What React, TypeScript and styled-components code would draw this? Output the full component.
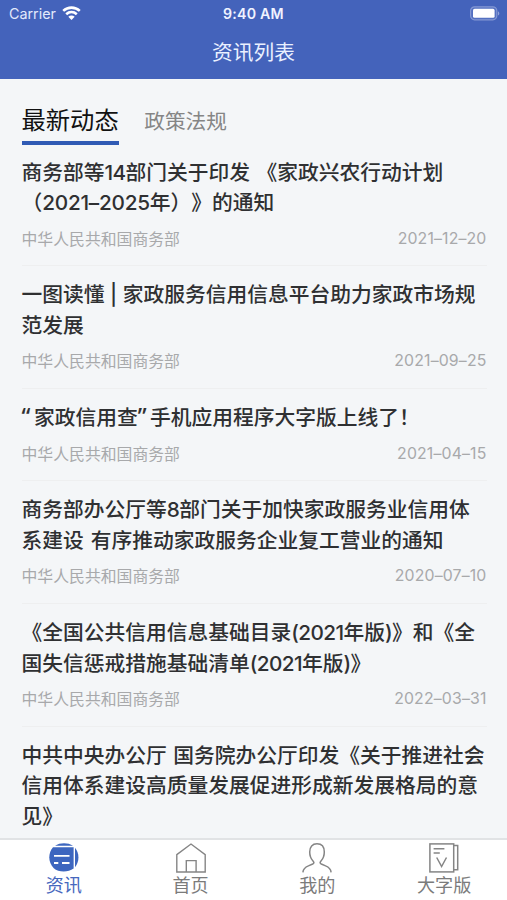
import React from "react";
import styled, { createGlobalStyle } from "styled-components";

const Global = createGlobalStyle`
  * { box-sizing: border-box; }
  html, body { margin: 0; padding: 0; }
  body {
    font-family: Inter, "Noto Sans CJK SC", sans-serif;
    background: #f4f6f8;
    overflow: hidden;
    text-spacing-trim: space-all;
  }
`;

const Screen = styled.div`
  width: 507px;
  height: 900px;
  display: flex;
  flex-direction: column;
  overflow: hidden;
  background: #f4f6f8;
`;

const Header = styled.header`
  height: 79px;
  flex: none;
  background: #4463bb;
  color: #fff;
`;

const StatusBar = styled.div`
  height: 27px;
  padding: 0 7px 0 9px;
  display: grid;
  grid-template-columns: 1fr auto 1fr;
  align-items: center;
`;

const Carrier = styled.div`
  display: flex;
  align-items: center;
  gap: 6px;
  font-size: 14.3px;
  color: #e3e9fb;
`;

const Clock = styled.div`
  font-size: 14.2px;
  font-weight: 600;
  letter-spacing: 0.2px;
  color: #f0f3ff;
  margin-right: 2px;
`;

const Battery = styled.div`
  display: flex;
  justify-content: flex-end;
`;

const PageTitle = styled.h1`
  margin: 0;
  height: 52px;
  line-height: 52px;
  text-align: center;
  font-size: 20.7px;
  font-weight: 400;
  color: #eaf0ff;
`;

const Content = styled.main`
  flex: 1;
  min-height: 0;
  overflow: hidden;
  padding: 22px 20.5px 0 21.5px;
`;

const Tabs = styled.nav`
  display: flex;
  height: 42.5px;
  gap: 25.5px;
`;

const Tab = styled.div<{ $active?: boolean }>`
  height: 43.5px;
  line-height: ${(p) => (p.$active ? 39 : 42)}px;
  font-size: ${(p) => (p.$active ? 24.3 : 20.7)}px;
  color: ${(p) => (p.$active ? "#111" : "#858585")};
  border-bottom: 4px solid ${(p) => (p.$active ? "#305bb5" : "transparent")};
`;

const Item = styled.article<{ $lines: number }>`
  height: ${(p) => 61.5 + p.$lines * 30.65}px;
  padding-top: 14px;
  border-bottom: 1px solid #eeeff0;
`;

const Title = styled.h2`
  margin: 0;
  font-size: 20.75px;
  line-height: 30.6px;
  font-weight: 500;
  color: #2f3032;
`;

const Line = styled.span<{ $space?: number }>`
  display: block;
  white-space: pre;
  word-spacing: ${(p) => p.$space ?? 0}px;
`;

const Digits = styled.span<{ $range?: boolean }>`
  letter-spacing: ${(p) => (p.$range ? -0.25 : -0.6)}px;
`;

const Quote = styled.span`
  display: inline-block;
  width: 12.4px;
  line-height: 1;
  font-family: "Noto Sans", sans-serif;
  font-size: 23px;
`;

const Meta = styled.div`
  margin-top: 7.5px;
  height: 24px;
  display: flex;
  justify-content: space-between;
  align-items: center;
  font-size: 15.85px;
  color: #a8a9ab;
`;

const PostDate = styled.time`
  letter-spacing: 0.15px;
`;

const TabBar = styled.footer`
  flex: none;
  height: 62px;
  display: grid;
  grid-template-columns: repeat(4, 1fr);
  background: #fff;
  border-top: 2px solid #e1e3e5;
`;

const BarItem = styled.div<{ $active?: boolean }>`
  display: flex;
  flex-direction: column;
  align-items: center;
  padding: 3px 0 0 1px;
  font-size: 18.1px;
  line-height: 25px;
  color: ${(p) => (p.$active ? "#4668be" : "#7b7b7b")};
  svg { display: block; flex: none; }
`;

type Row = { text: string; space?: number };

const news: { lines: Row[]; date?: string }[] = [
  {
    lines: [{ text: "商务部等14部门关于印发 《家政兴农行动计划", space: 1 }, { text: "（2021–2025年）》的通知" }],
    date: "2021–12–20",
  },
  {
    lines: [{ text: "一图读懂 | 家政服务信用信息平台助力家政市场规" }, { text: "范发展" }],
    date: "2021–09–25",
  },
  { lines: [{ text: "“家政信用查”手机应用程序大字版上线了！" }], date: "2021–04–15" },
  {
    lines: [
      { text: "商务部办公厅等8部门关于加快家政服务业信用体" },
      { text: "系建设 有序推动家政服务企业复工营业的通知", space: 1.5 },
    ],
    date: "2020–07–10",
  },
  {
    lines: [{ text: "《全国公共信用信息基础目录(2021年版)》和《全" }, { text: "国失信惩戒措施基础清单(2021年版)》" }],
    date: "2022–03–31",
  },
  {
    lines: [
      { text: "中共中央办公厅 国务院办公厅印发《关于推进社会", space: 1 },
      { text: "信用体系建设高质量发展促进形成新发展格局的意" },
      { text: "见》" },
    ],
  },
];

const renderText = (text: string) =>
  text.split(/([\d()–]+|[“”])/).map((part, i) => {
    if (/^[“”]$/.test(part)) return <Quote key={i}>{part}</Quote>;
    if (/^[\d()–]+$/.test(part)) {
      return (
        <Digits key={i} $range={part.includes("–")}>
          {part}
        </Digits>
      );
    }
    return part;
  });

const WifiIcon = () => (
  <svg width="19" height="15" viewBox="0 0 19 15" fill="none" stroke="#fff" strokeWidth="2.6">
    <path d="M1.2 4.9C6 .5 13 .5 17.8 4.9" />
    <path d="M4.2 8.2C7.3 5.4 11.7 5.4 14.8 8.2" />
    <path d="M9.5 13.9 6.3 10.7C8.1 9.1 10.9 9.1 12.7 10.7Z" fill="#fff" stroke="none" />
  </svg>
);

const BatteryIcon = () => (
  <svg width="31" height="15" viewBox="0 0 31 15">
    <rect x="1.6" y="0.8" width="26.2" height="13" rx="4" fill="#5470c1" stroke="#8498d3" strokeWidth="1.2" />
    <rect x="4" y="2.8" width="21.6" height="9" rx="1.6" fill="#fff" />
    <path d="M29 5.2c1.8.7 1.8 3.7 0 4.4Z" fill="#91a3d9" />
  </svg>
);

const NewsIcon = () => (
  <svg width="30" height="30" viewBox="0 0 30 30">
    <path d="M6 2.8C11-.5 19-.5 24 2.8Z" fill="#3d66bf" />
    <path d="M4 4.2h20.6v21.2C19 29.6 9.5 29.4 4.8 25.2-1.1 19.6-1.1 10 4 4.2Z" fill="#3d66bf" />
    <path d="M26 4.8c4.6 5.6 4.6 13.8 0 19.4Z" fill="#3d66bf" />
    <path d="M5 12.9h15.5M5 20h4.3M13 20h7.5" stroke="#fff" strokeWidth="1.9" />
  </svg>
);

const HomeIcon = () => (
  <svg width="30" height="30" viewBox="0 0 30 30" fill="none" stroke="#858585" strokeWidth="1.4">
    <path d="M.8 11.6 15 1 29.2 11.6V29H.8Z" />
    <path d="M10.3 29V17.6h9.8V29" />
  </svg>
);

const PersonIcon = () => (
  <svg width="30" height="30" viewBox="0 0 30 30" fill="none" stroke="#858585" strokeWidth="1.5">
    <path d="M.9 29.4C1.2 25.7 3.2 24.2 6.4 22.9L10.7 21C12.3 20.2 12.2 19.3 11 18C8.8 15.6 7.7 12.7 7.7 9C7.7 3.8 10.4 .8 15 .8S22.3 3.8 22.3 9C22.3 12.7 21.2 15.6 19 18C17.8 19.3 17.7 20.2 19.3 21L23.6 22.9C26.8 24.2 28.8 25.7 29.1 29.4" />
  </svg>
);

const LargePrintIcon = () => (
  <svg width="30" height="30" viewBox="0 0 30 30" fill="none" stroke="#858585" strokeWidth="1.5">
    <rect x="0.9" y="0.9" width="23.8" height="28" />
    <path d="M24.7 2.4h4v24.4h-4M4.6 5.7h10.8M4.6 10.1h6.2M7.7 14.5l4.9 9 4.9-9" />
  </svg>
);

export default function App() {
  return (
    <Screen>
      <Global />
      <Header>
        <StatusBar>
          <Carrier>
            Carrier <WifiIcon />
          </Carrier>
          <Clock>9:40 AM</Clock>
          <Battery>
            <BatteryIcon />
          </Battery>
        </StatusBar>
        <PageTitle>资讯列表</PageTitle>
      </Header>
      <Content>
        <Tabs>
          <Tab $active>最新动态</Tab>
          <Tab>政策法规</Tab>
        </Tabs>
        {news.map((item, i) => (
          <Item key={i} $lines={item.lines.length}>
            <Title>
              {item.lines.map((line, j) => (
                <Line key={j} $space={line.space}>
                  {renderText(line.text)}
                </Line>
              ))}
            </Title>
            {item.date && (
              <Meta>
                <span>中华人民共和国商务部</span>
                <PostDate>{item.date}</PostDate>
              </Meta>
            )}
          </Item>
        ))}
      </Content>
      <TabBar>
        <BarItem $active>
          <NewsIcon />
          资讯
        </BarItem>
        <BarItem>
          <HomeIcon />
          首页
        </BarItem>
        <BarItem>
          <PersonIcon />
          我的
        </BarItem>
        <BarItem>
          <LargePrintIcon />
          大字版
        </BarItem>
      </TabBar>
    </Screen>
  );
}
